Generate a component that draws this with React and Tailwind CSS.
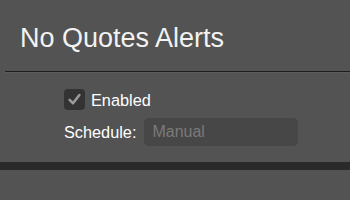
import React from "react";

const CheckIcon = () => (
  <svg viewBox="0 0 20 20" className="h-[15px] w-[15px]" fill="none">
    <path
      d="M3.5 10.5 L8 15 L16.5 4"
      stroke="#9a9a9a"
      strokeWidth="3.4"
      strokeLinecap="round"
      strokeLinejoin="round"
    />
  </svg>
);

const App = () => {
  return (
    <div className="min-h-[200px] w-full bg-[#535353] font-['Liberation_Sans',Arial,sans-serif] text-white">
      <div className="pt-[23px] pl-[20px]">
        <h1 className="text-[27px] leading-[30px] font-normal text-[#f2f2f2]">
          No Quotes Alerts
        </h1>
      </div>
      <div className="ml-[5px] mt-[18px] border-t border-b border-t-[#1e1e1e] border-b-[#5c5c5c]" />
      <div className="flex flex-col gap-[8px] pl-[64px] pt-[16px]">
        <label className="flex items-center gap-[6px]">
          <span className="flex h-[21px] w-[21px] items-center justify-center rounded-[4px] bg-[#333333]">
            <CheckIcon />
          </span>
          <span className="text-[16.3px] leading-[20px]">Enabled</span>
        </label>
        <div className="flex items-center gap-[8px]">
          <span className="text-[16.3px] leading-[20px]">Schedule:</span>
          <input
            className="h-[28px] w-[154px] rounded-[5px] bg-[#474747] px-[8px] text-[16px] text-white outline-none placeholder:text-[#7a7a7a]"
            placeholder="Manual"
            readOnly
          />
        </div>
      </div>
      <div className="mt-[16px] h-[8px] w-full bg-[#2a2a2a]" />
    </div>
  );
};

export default App;
